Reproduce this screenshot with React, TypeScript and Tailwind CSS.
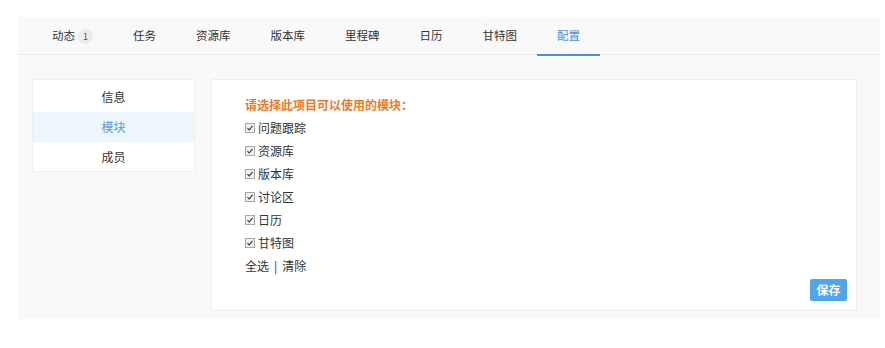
import { useState } from 'react';

const tabs = ['动态', '任务', '资源库', '版本库', '里程碑', '日历', '甘特图', '配置'];
const modules = ['问题跟踪', '资源库', '版本库', '讨论区', '日历', '甘特图'];
const menu = ['信息', '模块', '成员'];

function CheckBox() {
  return (
    <span className="w-[10px] h-[10px] border border-[#a6a6a6] bg-[#eef0f2] flex items-center justify-center mr-[3px] shrink-0">
      <svg viewBox="0 0 10 10" className="w-[8px] h-[8px]">
        <path d="M1.8 5.2 L4 7.4 L8.2 2.4" fill="none" stroke="#333" strokeWidth="1.3" />
      </svg>
    </span>
  );
}

export default function App() {
  const [active] = useState('配置');
  return (
    <div className="w-[885px] h-[348px] bg-white pt-[17px] pl-[18px] font-['Noto_Sans_CJK_SC','Microsoft_YaHei',sans-serif] text-[12px] text-[#333]">
      <div className="w-[862px] h-[302px] bg-[#f9f9f9]">
        {/* Tabs */}
        <div className="h-[38px] border-b border-[#ebebeb] flex pl-[14px] text-[11.5px]">
          {tabs.map((t) => (
            <div
              key={t}
              className={`relative flex items-center px-[20px] h-[38px] ${t === active ? 'text-[#4a90e2]' : ''}`}
            >
              {t}
              {t === '动态' && (
                <span className="ml-[3px] w-[15px] h-[15px] rounded-full bg-[#ececec] text-[9px] leading-[15px] text-center text-[#555]">1</span>
              )}
              {t === active && <span className="absolute left-0 right-0 bottom-[-1px] h-[2px] bg-[#4a90e2]" />}
            </div>
          ))}
        </div>

        {/* Body */}
        <div className="flex gap-[16px] pt-[24px] pl-[14px] pr-[23px]">
          <div className="w-[163px] h-[93px] bg-white border border-[#f0f0f0] pt-[2px] self-start">
            {menu.map((m) => (
              <div
                key={m}
                className={`h-[30px] flex items-center justify-center ${m === '模块' ? 'bg-[#eef6fd] text-[#5a9bd8]' : ''}`}
              >
                {m}
              </div>
            ))}
          </div>

          <div className="flex-1 h-[232px] bg-white border border-[#efefef] pl-[33px] pr-[9px] pt-[17px] flex flex-col">
            <div className="text-[#f0781e] font-bold leading-[16px] mb-[3px]">请选择此项目可以使用的模块：</div>
            {modules.map((m) => (
              <div key={m} className="flex items-center h-[23px]">
                <CheckBox />
                {m}
              </div>
            ))}
            <div className="flex items-center h-[23px]">
              全选<span className="mx-[5px]">|</span>清除
            </div>
            <div className="flex justify-end mt-[2px]">
              <button className="w-[37px] h-[22px] rounded-[2px] bg-[#4ea6f0] text-white font-bold text-[12px]">保存</button>
            </div>
          </div>
        </div>
      </div>
    </div>
  );
}
